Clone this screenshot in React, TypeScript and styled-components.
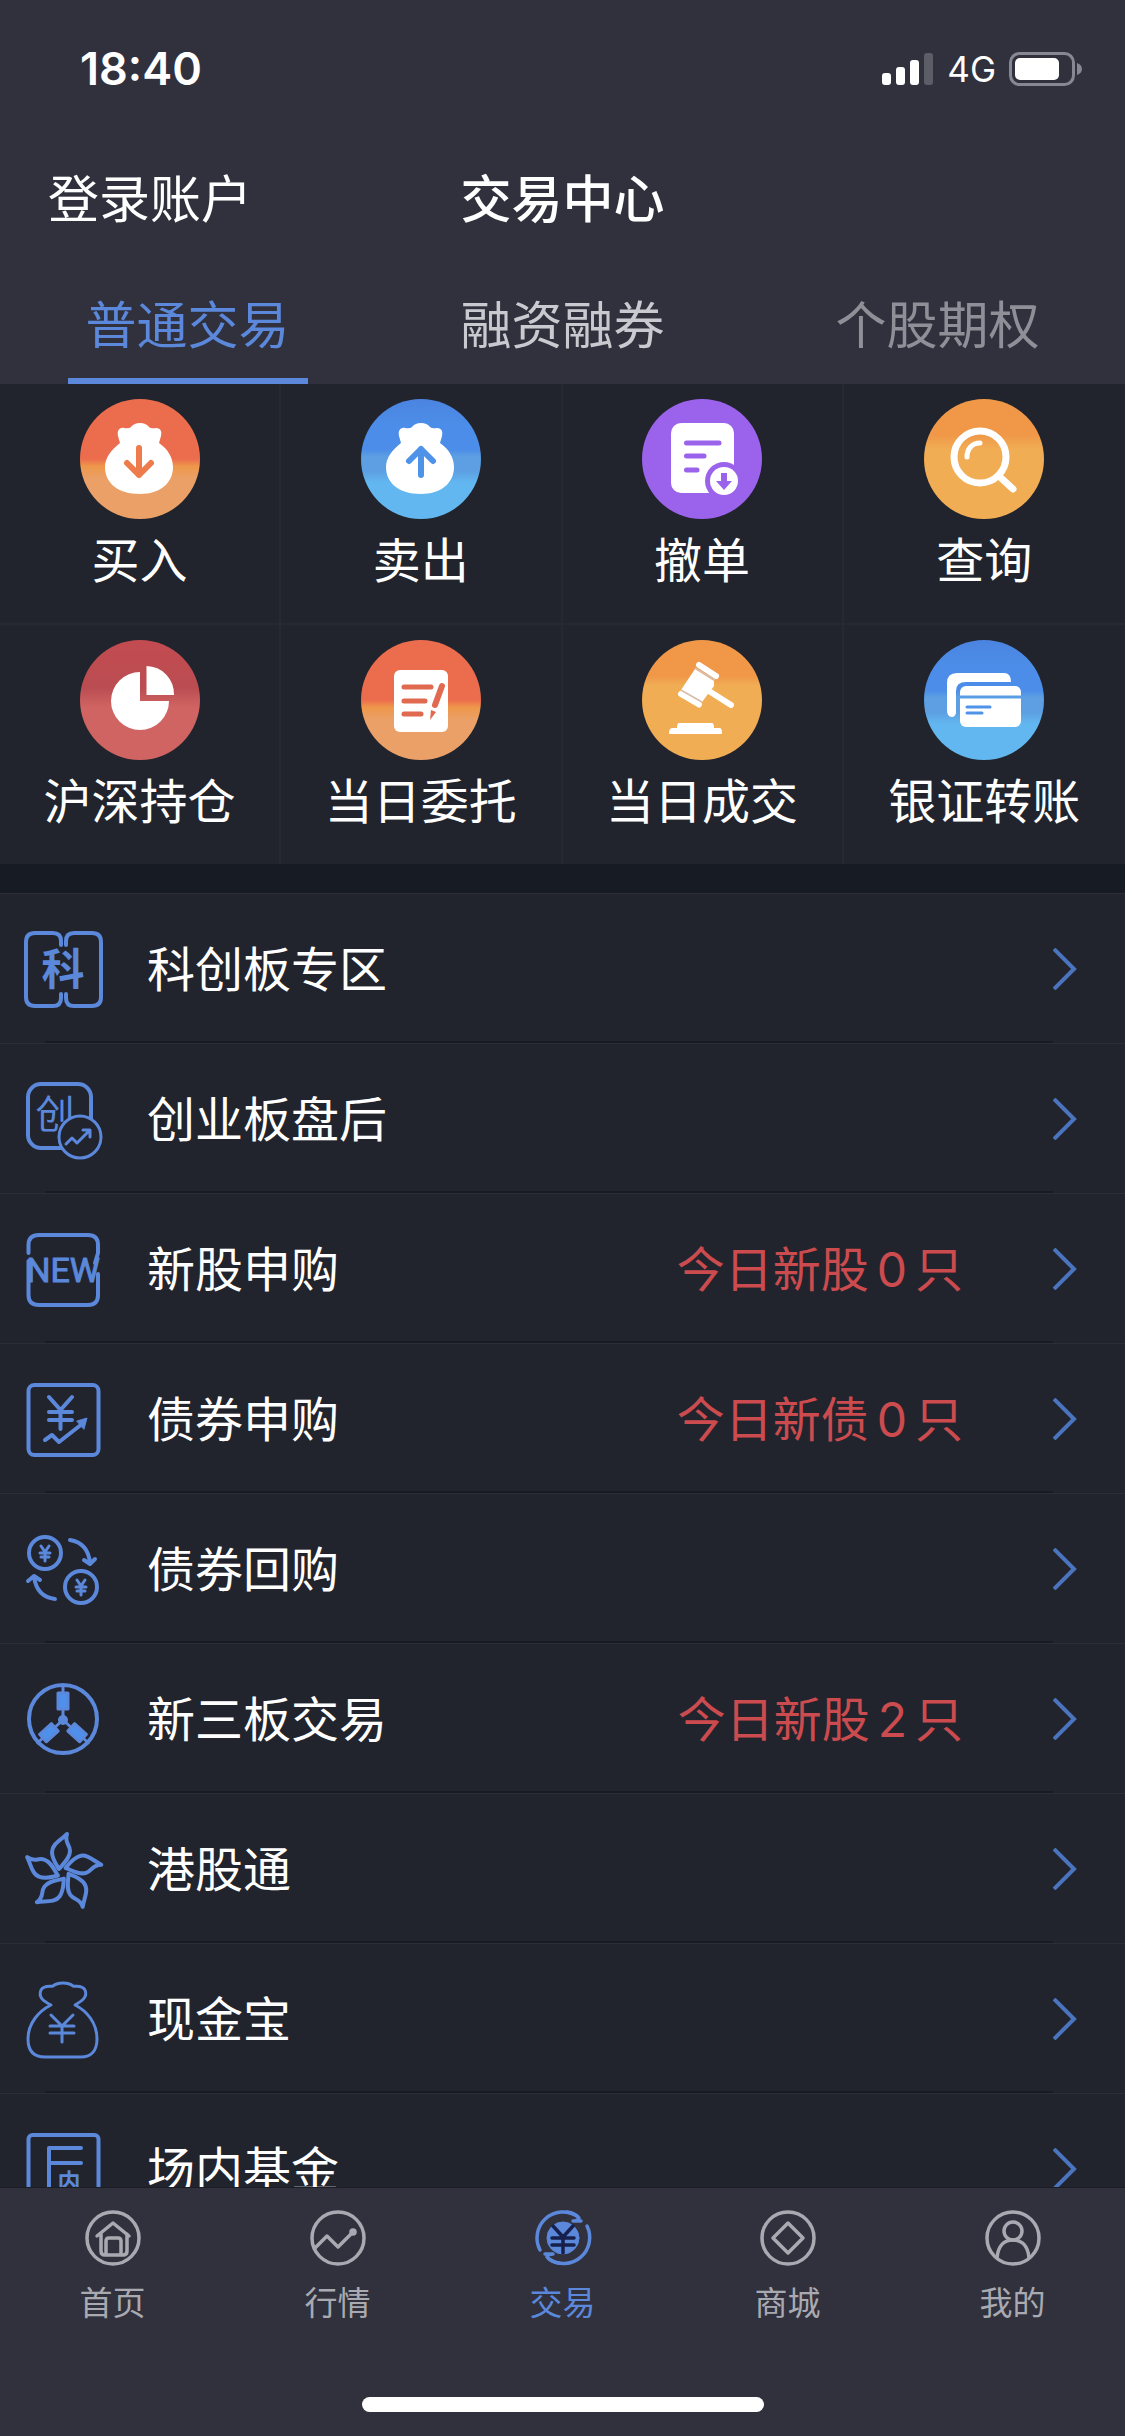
import React from "react";
import styled, { createGlobalStyle } from "styled-components";

const color = {
  bar: "#30313d",
  surface: "#21242d",
  band: "#171b24",
  line: "#2b2d38",
  groove: "#191b24",
  blue: "#5b88da",
  red: "#cb4b4e",
  white: "#ffffff",
  muted: "#a9aab1",
};

const latin = `Inter, "Noto Sans CJK SC", sans-serif`;

const GlobalStyle = createGlobalStyle`
  * { box-sizing: border-box; }
  body {
    margin: 0;
    background: ${color.bar};
    color: ${color.white};
    font-family: "Noto Sans CJK SC", sans-serif;
  }
  button {
    margin: 0;
    padding: 0;
    border: 0;
    background: none;
    color: inherit;
    font: inherit;
    cursor: pointer;
  }
  a { color: inherit; text-decoration: none; }
  ul { margin: 0; padding: 0; list-style: none; }
  svg { display: block; flex: none; }
`;

const Screen = styled.div`
  display: flex;
  flex-direction: column;
  height: 100vh;
  background: ${color.surface};
`;

const Top = styled.header`
  flex: none;
  background: ${color.bar};
`;

const StatusBar = styled.div`
  display: flex;
  align-items: center;
  justify-content: space-between;
  height: 132px;
  padding: 6px 42px 0 80px;
  font-family: ${latin};
`;

const Clock = styled.time`
  font-size: 45px;
  font-weight: 600;
  line-height: 54px;
`;

const Signals = styled.div`
  display: flex;
  align-items: center;
  gap: 13px;
`;

const Network = styled.span`
  font-size: 35px;
  font-weight: 400;
  line-height: 42px;
`;

const TitleBar = styled.div`
  display: grid;
  grid-template-columns: 1fr auto 1fr;
  align-items: center;
  height: 132px;
  padding: 0 48px 4px;
  font-size: 51px;
  line-height: 64px;
`;

const LoginButton = styled.button`
  justify-self: start;
`;

const Title = styled.h1`
  margin: 0;
  font-size: 51px;
  font-weight: 500;
`;

const Tabs = styled.div`
  display: grid;
  grid-template-columns: repeat(3, 1fr);
  height: 120px;
`;

const Tab = styled.button<{ $tone: string; $active?: boolean }>`
  position: relative;
  padding-bottom: 4px;
  color: ${(p) => p.$tone};
  font-size: 51px;
  line-height: 64px;

  &::after {
    content: "";
    position: absolute;
    left: 50%;
    bottom: 0;
    width: 240px;
    height: 6px;
    margin-left: -120px;
    background: ${(p) => (p.$active ? color.blue : "transparent")};
  }
`;

const Content = styled.main`
  flex: 1;
  min-height: 0;
  overflow-y: auto;
  scrollbar-width: none;
  background: ${color.band};
`;

const Grid = styled.div`
  display: grid;
  grid-template-columns: repeat(4, 1fr);
  background: ${color.surface};
`;

const GridItem = styled.button`
  display: flex;
  flex-direction: column;
  align-items: center;
  gap: 10px;
  padding: 15px 0 38px;
  border-right: 2px solid #262933;
  font-size: 48px;
  line-height: 56px;

  &:nth-child(4n) {
    border-right: 0;
  }
  &:nth-child(-n + 4) {
    border-bottom: 2px solid #262933;
  }
`;

const Badge = styled.span<{ $fill: string }>`
  width: 120px;
  height: 120px;
  border-radius: 50%;
  background: ${(p) => p.$fill};
`;

const List = styled.ul`
  margin-top: 29px;
  background: ${color.surface};
`;

const Item = styled.li`
  height: 150px;
  border-top: 1px solid ${color.line};

  &::after {
    content: "";
    display: block;
    height: 2px;
    margin: 0 72px 0 45px;
    background: ${color.groove};
  }
`;

const RowLink = styled.a`
  display: flex;
  align-items: center;
  height: 147px;
  padding: 2px 48px 0 21px;
  font-size: 48px;
  line-height: 64px;
`;

const RowName = styled.span`
  flex: 1;
  padding: 0 0 6px 42px;
`;

const RowNote = styled.span`
  margin-right: 90px;
  padding-bottom: 2px;
  color: ${color.red};
`;

const Count = styled.span`
  padding: 0 8px;
  font-family: ${latin};
`;

const Bottom = styled.footer`
  flex: none;
  border-top: 1px solid #1b1d26;
  background: ${color.bar};
`;

const NavBar = styled.nav`
  display: grid;
  grid-template-columns: repeat(5, 1fr);
  padding-top: 20px;
`;

const NavLink = styled.a<{ $active?: boolean }>`
  display: flex;
  flex-direction: column;
  align-items: center;
  gap: 12px;
  color: ${(p) => (p.$active ? color.blue : color.muted)};
  font-size: 33px;
  line-height: 42px;
`;

const HomeIndicator = styled.div`
  width: 402px;
  height: 15px;
  margin: 75px auto 24px;
  border-radius: 8px;
  background: ${color.white};
`;

const SignalBars = () => (
  <svg width="52" height="34" viewBox="0 0 52 34" fill="#fff">
    <rect x="0" y="21" width="9" height="12" rx="3" />
    <rect x="14" y="15" width="9" height="18" rx="3" />
    <rect x="28" y="8" width="9" height="25" rx="3" />
    <rect x="42" y="1" width="9" height="32" rx="3" fill="#5c5d67" />
  </svg>
);

const Battery = () => (
  <svg width="74" height="34" viewBox="0 0 74 34">
    <rect x="1.5" y="1.5" width="63" height="31" rx="9" fill="none" stroke="#858792" strokeWidth="3" />
    <rect x="6" y="6" width="44" height="22" rx="5" fill="#fff" />
    <path d="M68 11c3 1 5 3 5 6s-2 5-5 6z" fill="#858792" />
  </svg>
);

const bag =
  "M44 29Q49 30 51 28Q54 24 60 24Q66 24 69 28Q71 30 76 29C81 29 82 33 81 37L79 44C88 50 93 59 93 68C93 84 80 95 60 95C38 95 25 84 25 68C25 59 31 51 40 44L38 37C37 32 39 28 44 29Z";

const BuyArt = () => (
  <svg viewBox="0 0 120 120">
    <path d={bag} fill="#fff" />
    <path d="M59 49V76M47 64L59 76L71 64" fill="none" stroke="#ee7b4c" strokeWidth="6" strokeLinecap="round" strokeLinejoin="round" />
  </svg>
);

const SellArt = () => (
  <svg viewBox="0 0 120 120">
    <path d={bag} fill="#fff" />
    <path d="M60 76V50M48 62L60 50L72 62" fill="none" stroke="#4f93e8" strokeWidth="6" strokeLinecap="round" strokeLinejoin="round" />
  </svg>
);

const CancelArt = () => (
  <svg viewBox="0 0 120 120">
    <rect x="29" y="24" width="63" height="70" rx="10" fill="#fff" />
    <path d="M44.500 44H77M44.500 57H62M44.500 71H55" stroke="#9b63ec" strokeWidth="5" strokeLinecap="round" />
    <circle cx="82" cy="82" r="19" fill="#9b63ec" />
    <circle cx="82" cy="82" r="14" fill="#fff" />
    <path d="M79 74H85V82H90L82 91L74 82H79Z" fill="#9b63ec" />
  </svg>
);

const QueryArt = () => (
  <svg viewBox="0 0 120 120" fill="none" stroke="#fff" strokeLinecap="round">
    <circle cx="56" cy="58" r="26" strokeWidth="7" />
    <path d="M76 78L89 90" strokeWidth="7" />
    <path d="M43 58C43 50 48 44 56 44" strokeWidth="5" />
  </svg>
);

const HoldingArt = () => (
  <svg viewBox="0 0 120 120" fill="#fff">
    <path d="M60 61V32A29 29 0 1 0 89 61Z" />
    <path d="M66.500 55V26A28 28 0 0 1 94 55Z" />
  </svg>
);

const OrderArt = () => (
  <svg viewBox="0 0 120 120">
    <rect x="33" y="30" width="54" height="62" rx="6" fill="#fff" />
    <path d="M43 47H70M43 61H64M43 74H60" stroke="#e0694f" strokeWidth="5" strokeLinecap="round" />
    <path d="M81 46L74 65" stroke="#e0694f" strokeWidth="6" strokeLinecap="round" />
    <path d="M70 70L75 72L69 80Z" fill="#e0694f" />
  </svg>
);

const DealArt = () => (
  <svg viewBox="0 0 120 120" fill="#fff">
    <path d="M57 25L74 36" stroke="#fff" strokeWidth="6" strokeLinecap="round" />
    <path d="M53 29L72 41V46L60 62L39 50Z" />
    <path d="M39 54L57 64.500" stroke="#fff" strokeWidth="6" strokeLinecap="round" />
    <path d="M53 28L73 40M39 50L60 62" stroke="#d9bfae" strokeWidth="1.500" />
    <path d="M67 51L89 65" stroke="#fff" strokeWidth="6" strokeLinecap="round" />
    <path d="M37 83H70Q72 83 72 88H78Q80 88 80 94H27Q27 88 30 88H35Q35 83 37 83Z" />
  </svg>
);

const TransferArt = () => (
  <svg viewBox="0 0 120 120">
    <path d="M33 33H80Q87 33 87 42H42Q32 42 32 51V73Q31 77 28 77Q23 77 23 70V43Q23 33 33 33Z" fill="#fff" />
    <rect x="36" y="46" width="61" height="41" rx="6" fill="#fff" />
    <path d="M36 57H97" stroke="#5a9de4" strokeWidth="3" />
    <path d="M43 67H66M43 73H58" stroke="#4f93e8" strokeWidth="3" strokeLinecap="round" />
  </svg>
);

const LineArt = ({ children }: { children: React.ReactNode }) => (
  <svg width="84" height="84" viewBox="0 0 84 84" fill="none" stroke={color.blue} strokeWidth="4" strokeLinecap="round" strokeLinejoin="round">
    {children}
  </svg>
);

const Glyph = styled.text`
  fill: ${color.blue};
  stroke: none;
  text-anchor: middle;
  font-family: "Noto Sans CJK SC", sans-serif;
`;

const StarBoardArt = () => (
  <LineArt>
    <path d="M40 18V14Q40 6 32 6H14Q5 6 5 15V70Q5 79 14 79H32Q40 79 40 71V67" />
    <path d="M45 18V14Q45 6 53 6H71Q80 6 80 15V70Q80 79 71 79H53Q45 79 45 71V67" />
    <Glyph x="42" y="58" fontSize="43" fontWeight="700">科</Glyph>
  </LineArt>
);

const GrowthBoardArt = () => (
  <LineArt>
    <rect x="7" y="7" width="63" height="64" rx="13" />
    <Glyph x="34" y="51" fontSize="39" fontWeight="400">创</Glyph>
    <circle cx="59" cy="60" r="21" fill={color.surface} strokeWidth="3" />
    <path d="M45 67L51 61L56 66L69 53M62 53H69V60" strokeWidth="3" />
  </LineArt>
);

const NewStockArt = () => (
  <LineArt>
    <path d="M7.500 26V18Q7.500 8 18 8H67Q77 8 77 18V26L74 36" />
    <path d="M7.500 34V68Q7.500 78 18 78H67Q77 78 77 68V47" />
    <text x="42" y="55" fontSize="34" fontWeight="400" fontFamily="Roboto, sans-serif" textAnchor="middle" fill={color.blue} strokeWidth="1">NEW</text>
  </LineArt>
);

const BondArt = () => (
  <LineArt>
    <rect x="7.500" y="8" width="70" height="70" rx="6" />
    <path d="M28 20L39.500 33L51 20M39.500 33V52M28 35H51M28 43H51" />
    <path d="M24 63L31 58L38 65L61 47" />
    <path d="M56 44L66 41L63 52Z" fill={color.blue} strokeWidth="1" />
  </LineArt>
);

const RepoArt = () => (
  <LineArt>
    <circle cx="24" cy="26" r="16" />
    <circle cx="60" cy="60" r="16" />
    <path d="M20 19L24 25L28 19M24 25V34M19 26H29M20 30H28M56 53L60 59L64 53M60 59V68M55 60H65M56 64H64" strokeWidth="3" />
    <path d="M49 13Q67 16 69 36M63 33L69 37L74 32" />
    <path d="M34 72Q16 70 13 50M7 54L13 49L19 53" />
  </LineArt>
);

const ThirdBoardArt = () => (
  <LineArt>
    <circle cx="42" cy="42" r="34" />
    <circle cx="42" cy="43" r="3" fill={color.blue} />
    {[0, 132, 228].map((angle) => (
      <g key={angle} transform={`rotate(${angle} 42 43)`}>
        <path d="M42 43V9" strokeWidth="3" />
        <rect x="37" y="16" width="10" height="16" fill="#4e90ec" strokeWidth="3" />
      </g>
    ))}
  </LineArt>
);

const FlowerArt = () => (
  <LineArt>
    {[0, 72, 144, 216, 288].map((angle) => (
      <path key={angle} transform={`rotate(${angle} 42 46)`} d="M46 7C40 13 31 17 31 25C31 32 35 37 38 42C43 36 49 31 49 24C49 17 43 16 46 7Z" />
    ))}
  </LineArt>
);

const CashArt = () => (
  <LineArt>
    <path d="M30 28C22 24 17 20 20 13C23 8 29 10 32 9C37 5 47 5 52 9C56 10 61 8 64 13C67 20 61 24 54 28C66 34 76 46 76 62C76 74 70 80 60 80H24C13 80 7 74 7 62C7 46 18 34 30 28Z" strokeWidth="3" />
    <path d="M30 38L41 49L52 38M41 49V65M29 49H53M29 56H53" strokeWidth="3" />
  </LineArt>
);

const FundArt = () => (
  <LineArt>
    <rect x="7.500" y="8" width="70" height="70" rx="4" />
    <path d="M60 21H28V72M28 36H60" />
    <Glyph x="48" y="63" fontSize="23" fontWeight="700">内</Glyph>
  </LineArt>
);

const Chevron = () => (
  <svg width="24" height="42" viewBox="0 0 24 42" fill="none" stroke="#4a74bf" strokeWidth="4">
    <path d="M1 1L21 21L1 41" />
  </svg>
);

const NavArt = ({ children }: { children: React.ReactNode }) => (
  <svg width="60" height="60" viewBox="0 0 60 60" fill="none" stroke="currentColor" strokeWidth="3.5" strokeLinejoin="round" strokeLinecap="round">
    {children}
  </svg>
);

const Ring = () => <circle cx="30" cy="30" r="26" />;

const actions = [
  { label: "买入", fill: "linear-gradient(#ec6d4e 50%, #ee974a 56%, #eba067 66%)", Art: BuyArt },
  { label: "卖出", fill: "linear-gradient(#4b84e0, #4b8de8 20%, #4b8de8 42%, #5d9fe2 48%, #5d9fe2 60%, #62b7f0 70%)", Art: SellArt },
  { label: "撤单", fill: "#9b63ec", Art: CancelArt },
  { label: "查询", fill: "linear-gradient(#f09848 30%, #f1ad54 42%)", Art: QueryArt },
  { label: "沪深持仓", fill: "linear-gradient(#c24b50, #ba4d52 40%, #d06462 56%)", Art: HoldingArt },
  { label: "当日委托", fill: "linear-gradient(#ec6d4e 50%, #ee974a 56%, #eba067 66%)", Art: OrderArt },
  { label: "当日成交", fill: "linear-gradient(#f09848 30%, #f1ad54 38%)", Art: DealArt },
  { label: "银证转账", fill: "linear-gradient(#4b84e0, #4b8de8 20%, #4b8de8 42%, #5d9fe2 48%, #5d9fe2 60%, #62b7f0 70%)", Art: TransferArt },
];

const rows = [
  { name: "科创板专区", Art: StarBoardArt },
  { name: "创业板盘后", Art: GrowthBoardArt },
  { name: "新股申购", Art: NewStockArt, note: "今日新股", count: 0 },
  { name: "债券申购", Art: BondArt, note: "今日新债", count: 0 },
  { name: "债券回购", Art: RepoArt },
  { name: "新三板交易", Art: ThirdBoardArt, note: "今日新股", count: 2 },
  { name: "港股通", Art: FlowerArt },
  { name: "现金宝", Art: CashArt },
  { name: "场内基金", Art: FundArt },
];

const tabs = [
  { label: "普通交易", tone: color.blue, active: true },
  { label: "融资融券", tone: "#c9cacf" },
  { label: "个股期权", tone: "#8e8f97" },
];

const App = () => (
  <>
    <GlobalStyle />
    <Screen>
      <Top>
        <StatusBar>
          <Clock>18:40</Clock>
          <Signals>
            <SignalBars />
            <Network>4G</Network>
            <Battery />
          </Signals>
        </StatusBar>
        <TitleBar>
          <LoginButton type="button">登录账户</LoginButton>
          <Title>交易中心</Title>
        </TitleBar>
        <Tabs role="tablist">
          {tabs.map((t) => (
            <Tab key={t.label} type="button" role="tab" aria-selected={!!t.active} $tone={t.tone} $active={t.active}>
              {t.label}
            </Tab>
          ))}
        </Tabs>
      </Top>
      <Content>
        <Grid>
          {actions.map(({ label, fill, Art }) => (
            <GridItem key={label} type="button">
              <Badge $fill={fill}>
                <Art />
              </Badge>
              {label}
            </GridItem>
          ))}
        </Grid>
        <List>
          {rows.map(({ name, Art, note, count }) => (
            <Item key={name}>
              <RowLink href="#">
                <Art />
                <RowName>{name}</RowName>
                {note && (
                  <RowNote>
                    {note}
                    <Count>{count}</Count>只
                  </RowNote>
                )}
                <Chevron />
              </RowLink>
            </Item>
          ))}
        </List>
      </Content>
      <Bottom>
        <NavBar>
          <NavLink href="#">
            <NavArt>
              <Ring />
              <path d="M14 28L30 15L46 28M18 26V43Q18 47 22 47H40Q44 47 44 43V26M23 47V33Q23 30 26 30H35Q38 30 38 33V47" />
            </NavArt>
            首页
          </NavLink>
          <NavLink href="#">
            <NavArt>
              <Ring />
              <path d="M7 40L19 28L30 39L45 24" />
              <circle cx="45" cy="24" r="2" fill="currentColor" />
            </NavArt>
            行情
          </NavLink>
          <NavLink href="#" $active aria-current="page">
            <NavArt>
              <path d="M7 42A26 26 0 0 1 44 8" />
              <path d="M34 4Q42 5 46 10Q45 13 40 13H48" />
              <path d="M54 18A26 26 0 0 1 16 51" />
              <path d="M26 55Q18 54 14 49Q15 46 20 46H12" />
              <circle cx="30" cy="30" r="16" fill="currentColor" strokeWidth="1" />
              <path d="M20 18L30 29L40 18M30 29V45M19 30H41M19 37H41" stroke="#16204a" />
            </NavArt>
            交易
          </NavLink>
          <NavLink href="#">
            <NavArt>
              <Ring />
              <path d="M30 15L45 30L30 45L15 30Z" />
            </NavArt>
            商城
          </NavLink>
          <NavLink href="#">
            <NavArt>
              <Ring />
              <circle cx="30" cy="23" r="9" />
              <path d="M14 50C15 38 21 32 30 32C39 32 45 38 46 50" />
            </NavArt>
            我的
          </NavLink>
        </NavBar>
        <HomeIndicator />
      </Bottom>
    </Screen>
  </>
);

export default App;
